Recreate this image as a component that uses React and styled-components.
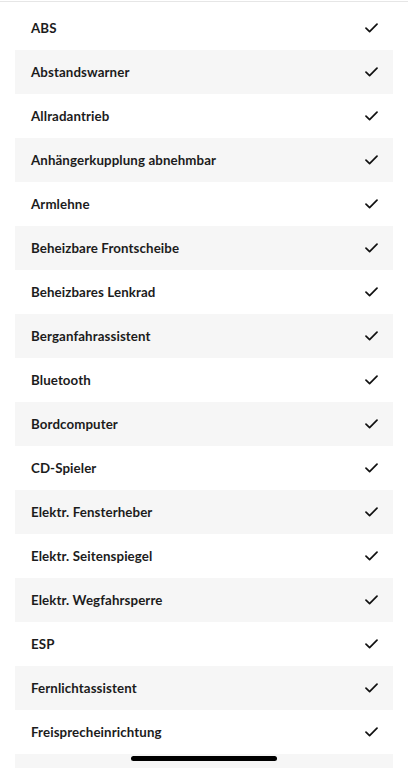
import React from 'react';
import styled, { createGlobalStyle } from 'styled-components';

const items = [
  'ABS',
  'Abstandswarner',
  'Allradantrieb',
  'Anhängerkupplung abnehmbar',
  'Armlehne',
  'Beheizbare Frontscheibe',
  'Beheizbares Lenkrad',
  'Berganfahrassistent',
  'Bluetooth',
  'Bordcomputer',
  'CD-Spieler',
  'Elektr. Fensterheber',
  'Elektr. Seitenspiegel',
  'Elektr. Wegfahrsperre',
  'ESP',
  'Fernlichtassistent',
  'Freisprecheinrichtung',
  'Geschwindigkeitsregelanlage',
];

const GlobalStyle = createGlobalStyle`
  html, body {
    margin: 0;
    padding: 0;
    background: #fff;
  }
  body {
    font-family: Lato, "Noto Sans", sans-serif;
    overflow: hidden;
  }
`;

const Screen = styled.div`
  width: 408px;
  height: 768px;
  overflow: hidden;
  position: relative;
  background: #fff;
`;

const TopRule = styled.div`
  margin-top: 1px;
  height: 1px;
  background: #e6e6e6;
`;

const List = styled.ul`
  list-style: none;
  margin: 0;
  padding: 4px 15px 0;
`;

const Row = styled.li`
  height: 44px;
  display: flex;
  align-items: center;
  justify-content: space-between;
  padding: 0 15px 0 16px;
  background: ${(p) => (p.$shaded ? '#f6f6f6' : '#fff')};
`;

const Label = styled.span`
  font-size: 13.3px;
  font-weight: 700;
  color: #1c1c1c;
  letter-spacing: 0.1px;
`;

const Check = () => (
  <svg width="13" height="10" viewBox="0 0 13 10" fill="none">
    <path d="M1 5.2 L4.6 8.6 L12 1.2" stroke="#111" strokeWidth="1.7" strokeLinecap="round" strokeLinejoin="round" />
  </svg>
);

const HomeIndicator = styled.div`
  position: absolute;
  left: 131px;
  bottom: 7px;
  width: 146px;
  height: 5px;
  border-radius: 3px;
  background: #000;
`;

export default function App() {
  return (
    <Screen>
      <GlobalStyle />
      <TopRule />
      <List>
        {items.map((name, i) => (
          <Row key={name} $shaded={i % 2 === 1}>
            <Label>{name}</Label>
            <Check />
          </Row>
        ))}
      </List>
      <HomeIndicator />
    </Screen>
  );
}
